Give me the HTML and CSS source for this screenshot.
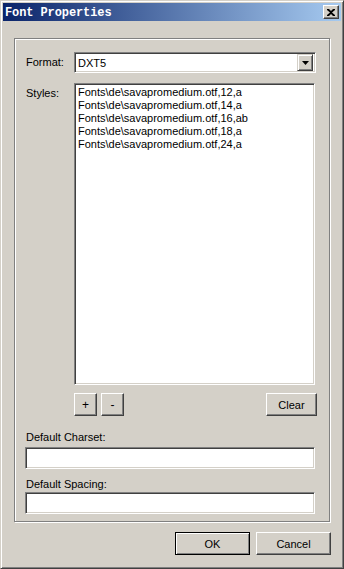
FILE: index.html
```html
<!DOCTYPE html>
<html lang="en">
<head>
  <meta charset="UTF-8" />
  <title>Font Properties</title>
  <link rel="stylesheet" href="styles.css">
</head>
<body>

  <div class="window">
    <div class="titlebar">
      <span class="title">Font Properties</span>
      <button class="close-btn">
        <svg width="8" height="7" viewBox="0 0 8 7">
          <path d="M0 0h2l2 2 2-2h2v1l-3 2.5 3 2.5v1h-2l-2-2-2 2h-2v-1l3-2.5-3-2.5z" fill="#000"/>
        </svg>
      </button>
    </div>

    <div class="client">
      <div class="groupbox">

        <div class="row">
          <label class="lbl">Format:</label>
          <div class="combo">
            <span class="combo-text">DXT5</span>
            <span class="combo-btn">
              <svg width="7" height="4" viewBox="0 0 7 4"><path d="M0 0h7l-3.5 4z" fill="#000"/></svg>
            </span>
          </div>
        </div>

        <div class="row row-styles">
          <label class="lbl lbl-styles">Styles:</label>
          <div class="styles">
            <div class="listbox">
              <div class="item">Fonts\de\savapromedium.otf,12,a</div>
              <div class="item">Fonts\de\savapromedium.otf,14,a</div>
              <div class="item">Fonts\de\savapromedium.otf,16,ab</div>
              <div class="item">Fonts\de\savapromedium.otf,18,a</div>
              <div class="item">Fonts\de\savapromedium.otf,24,a</div>
            </div>
            <div class="list-actions">
              <button class="btn btn-sm">+</button>
              <button class="btn btn-sm">-</button>
              <button class="btn btn-clear">Clear</button>
            </div>
          </div>
        </div>

        <label class="field-lbl lbl-charset">Default Charset:</label>
        <div class="edit edit-charset"></div>
        <label class="field-lbl lbl-spacing">Default Spacing:</label>
        <div class="edit edit-spacing"></div>

      </div>

      <div class="footer">
        <button class="btn btn-default">OK</button>
        <button class="btn btn-wide">Cancel</button>
      </div>
    </div>
  </div>

</body>
</html>
```

FILE: styles.css
```css
body {
  margin: 0;
  font-family: 'Liberation Sans', Arial, sans-serif;
  font-size: 11px;
  color: #000;
  background: #d4d0c8;
}

.window {
  width: 344px;
  height: 569px;
  box-sizing: border-box;
  background: #d4d0c8;
  border: 1px solid;
  border-color: #d4d0c8 #404040 #404040 #d4d0c8;
  box-shadow: inset 1px 1px 0 #fff, inset -1px -1px 0 #808080;
  padding: 2px;
  display: flex;
  flex-direction: column;
}

/* barre de titre */
.titlebar {
  height: 18px;
  display: flex;
  align-items: center;
  justify-content: space-between;
  padding: 0 2px;
  background: linear-gradient(to right, #0a246a, #a6caf0);
}

.title {
  font-family: 'Liberation Mono', monospace;
  font-weight: bold;
  font-size: 12px;
  color: #fff;
  letter-spacing: -0.1px;
  padding-top: 1px;
}

.close-btn {
  width: 16px;
  height: 14px;
  padding: 0;
  display: flex;
  align-items: center;
  justify-content: center;
  background: #d4d0c8;
  border: 1px solid;
  border-color: #fff #404040 #404040 #fff;
  box-shadow: inset -1px -1px 0 #808080;
}

.client {
  flex: 1;
  padding: 17px 10px 0 11px;
}

/* cadre grave */
.groupbox {
  width: 316px;
  box-sizing: border-box;
  border: 1px solid #808080;
  box-shadow: inset 1px 1px 0 #fff, 1px 1px 0 #fff;
  padding: 13px 13px 7px 10px;
}

.row {
  display: grid;
  grid-template-columns: 49px 1fr;
  align-items: center;
}

.row-styles {
  align-items: start;
  margin-top: 10px;
}

.lbl, .field-lbl {
  display: block;
  line-height: 13px;
  padding-left: 1px;
}

.lbl-styles {
  margin-top: 4px;
}

.combo, .listbox, .edit {
  background: #fff;
  border: 1px solid;
  border-color: #808080 #fff #fff #808080;
  box-shadow: inset 1px 1px 0 #404040, inset -1px -1px 0 #d4d0c8;
}

.combo {
  height: 21px;
  box-sizing: border-box;
  display: flex;
  align-items: center;
  justify-content: space-between;
  padding: 2px 2px 2px 3px;
}

.combo-btn {
  width: 16px;
  height: 17px;
  box-sizing: border-box;
  display: flex;
  align-items: center;
  justify-content: center;
  background: #d4d0c8;
  border: 1px solid;
  border-color: #d4d0c8 #404040 #404040 #d4d0c8;
  box-shadow: inset 1px 1px 0 #fff, inset -1px -1px 0 #808080;
}

.listbox {
  height: 302px;
  box-sizing: border-box;
  margin-right: 1px;
  padding: 2px 3px;
}

.item {
  line-height: 13px;
  white-space: nowrap;
}

.list-actions {
  display: flex;
  gap: 4px;
  margin-top: 8px;
  margin-right: -1px;
}

.btn {
  height: 23px;
  padding: 0;
  font-family: inherit;
  font-size: 11px;
  color: #000;
  background: #d4d0c8;
  border: 1px solid;
  border-color: #fff #404040 #404040 #fff;
  box-shadow: inset -1px -1px 0 #808080;
}

.btn-sm {
  width: 23px;
  font-size: 12px;
}

.btn-clear {
  width: 51px;
  margin-left: auto;
}

.lbl-charset {
  margin-top: 15px;
}

.lbl-spacing {
  margin-top: 9px;
}

.edit {
  height: 22px;
  box-sizing: border-box;
  margin-right: 1px;
}

.edit-charset {
  margin-top: 3px;
}

.edit-spacing {
  margin-top: 1px;
}

.footer {
  display: flex;
  justify-content: flex-end;
  gap: 6px;
  margin-top: 10px;
}

.footer .btn {
  width: 75px;
}

.btn-default {
  border-color: #000;
  box-shadow: inset 1px 1px 0 #fff, inset -1px -1px 0 #808080;
}
```
